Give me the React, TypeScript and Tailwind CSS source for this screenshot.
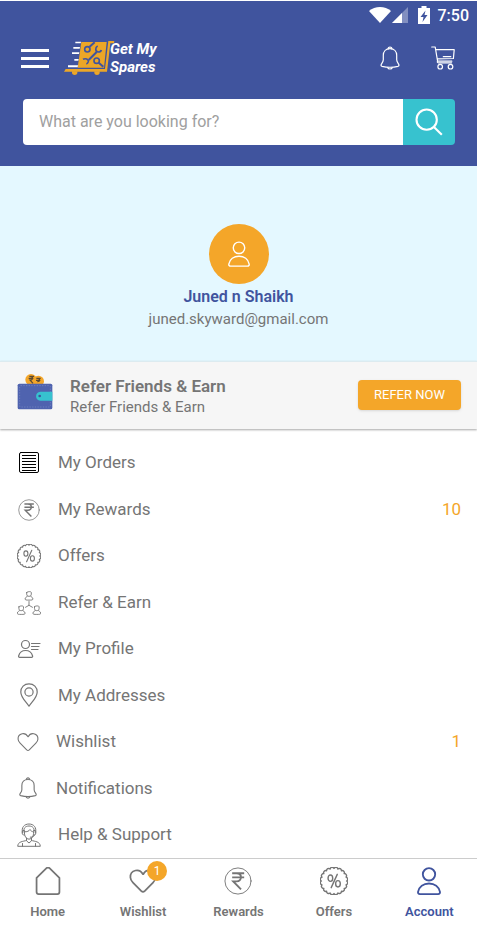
import type { ReactNode, SVGProps } from "react";

type IconProps = SVGProps<SVGSVGElement>;

function Icon({ children, ...props }: IconProps) {
  return (
    <svg
      viewBox="0 0 24 24"
      fill="none"
      stroke="currentColor"
      strokeWidth="1.2"
      strokeLinecap="round"
      strokeLinejoin="round"
      aria-hidden="true"
      {...props}
    >
      {children}
    </svg>
  );
}

// scalloped badge outline: small arcs bulging out around a circle
function scallop(cx: number, cy: number, r: number, bumps: number) {
  const pts = Array.from({ length: bumps }, (_, i) => {
    const a = (i / bumps) * Math.PI * 2;
    return `${(cx + r * Math.cos(a)).toFixed(2)} ${(cy + r * Math.sin(a)).toFixed(2)}`;
  });
  return `M${pts[0]} ` + [...pts.slice(1), pts[0]].map((p) => `A1.8 1.8 0 0 1 ${p}`).join(" ") + "Z";
}

const badgePath = scallop(12, 12, 10.8, 20);

const BellIcon = (p: IconProps) => (
  <Icon {...p}>
    <path d="M10.2 2.8a1.8 1.8 0 1 1 3.6 0" />
    <path d="M12 2.7c-4.300 0-6.700 2.900-6.700 6.600v4.500c0 1.900-.9 2.900-1.900 4.300-.7 1-.4 1.900.6 2.200 5 1.200 11 1.200 16 0 1-.3 1.300-1.200.6-2.200-1-1.400-1.900-2.400-1.900-4.300V9.300C18.700 5.600 16.300 2.700 12 2.700Z" />
    <path d="M9.700 21.500c.5 2 4.100 2 4.600 0" />
  </Icon>
);

const CartIcon = (p: IconProps) => (
  <Icon {...p}>
    <path d="M.7 1h3.500l2.400 14.200h14.200M4.800 3.700h18.400l-.8 8.800-15.900.4M12.300 10.700h7.500M6.600 15.200c-.7.8-.2 1.600.8 1.600h13.200" />
    <circle cx="9.200" cy="20.700" r="2.300" />
    <circle cx="19.500" cy="20.700" r="2.300" />
  </Icon>
);

const UserIcon = (p: IconProps) => (
  <Icon {...p}>
    <circle cx="12" cy="6.300" r="5.300" />
    <path d="M4.200 23.200h15.600c1.200 0 1.800-.8 1.600-1.900-.9-4.300-4.600-7.200-9.400-7.200s-8.500 2.900-9.400 7.200c-.2 1.100.4 1.900 1.600 1.900Z" />
  </Icon>
);

const HeartIcon = (p: IconProps) => (
  <Icon {...p}>
    <path d="M12 6.200C10.300 3.300 7.800 2.500 5.600 3 2.700 3.700 1 6.200 1.200 9c.1 1.900 1.100 3.200 2.200 4.300l7.200 7.300c.9.800 1.900.8 2.800 0l7.200-7.300c1.100-1.100 2.100-2.400 2.200-4.300.2-2.800-1.500-5.300-4.400-6-2.200-.5-4.700.3-6.200 3.200Z" />
  </Icon>
);

const RupeeIcon = (p: IconProps) => (
  <Icon {...p}>
    <circle cx="12" cy="12" r="11.200" strokeWidth=".8" />
    <path
      d="M7 5.400h10.300M7 8.900h10.300M7.500 5.400h3.300c5 0 5 6.900 0 6.900H7.900l6.700 6.900"
      strokeWidth="1.600"
      strokeLinecap="butt"
      strokeLinejoin="miter"
    />
  </Icon>
);

const OffersIcon = (p: IconProps) => (
  <Icon {...p}>
    <path d={badgePath} />
    <ellipse cx="8.900" cy="9.600" rx="2" ry="2.700" />
    <ellipse cx="15.400" cy="14.400" rx="2" ry="2.700" />
    <path d="m14.800 6.300-5.200 11.400" />
  </Icon>
);

const HomeIcon = (p: IconProps) => (
  <Icon {...p}>
    <path d="M2.200 9.300 10.700 1c.8-.7 1.800-.7 2.600 0l8.500 8.300v12.200c0 1-.7 1.700-1.700 1.700H3.900c-1 0-1.700-.7-1.700-1.700V9.300Z" />
  </Icon>
);

const OrdersIcon = (p: IconProps) => (
  <Icon {...p} className="size-6 text-black">
    <rect x="2.500" y="1.500" width="19" height="20" rx="1.500" strokeWidth="1" />
    <path d="M5 4.500h14M5 7.500h14M5 10.500h14M5 13.500h14M5 16.500h14M5 19.500h14" strokeWidth="1" strokeLinecap="butt" />
  </Icon>
);

const ReferIcon = (p: IconProps) => (
  <Icon {...p} strokeWidth=".9">
    {[
      [12, 0],
      [4.2, 14.3],
      [19.8, 14.3],
    ].map(([x, y]) => (
      <g key={x} transform={`translate(${x} ${y})`}>
        <path d="M-2.300 1.500C-2.300.5 2.300.1 2.300 1.500v1.700c0 2.900-4.600 2.900-4.600 0V1.500Z" />
        <path d="M-1.400 5.200c-.3.900-2.500.8-2.500 2.700 0 1.200 1.200 1.200 3.900 1.200s3.900 0 3.900-1.200c0-1.900-2.200-1.800-2.500-2.700" />
      </g>
    ))}
    <path d="M12 10.500v3.800l-3.500 2M12 14.300l3.500 2" />
  </Icon>
);

const ProfileIcon = (p: IconProps) => (
  <Icon {...p}>
    <circle cx="8.500" cy="7.500" r="4" />
    <path d="M2.600 20.300h12c.8 0 1.200-.6 1-1.300-.9-3.200-3.600-5.500-7-5.500S2.500 15.800 1.600 19c-.2.700.2 1.300 1 1.300Z" />
    <path d="M14.500 6.500h8.500M14.500 9.500h7.500M14.500 12.500h6.500" />
  </Icon>
);

const PinIcon = (p: IconProps) => (
  <Icon {...p}>
    <path d="M12 .8c-4.800 0-8.200 3.400-8.200 8.100C3.800 14.500 9 18.500 12 23.200c3-4.700 8.200-8.700 8.200-14.300C20.200 4.200 16.800.8 12 .8Z" />
    <circle cx="12" cy="9" r="4.100" />
  </Icon>
);

const SupportIcon = (p: IconProps) => (
  <Icon {...p} strokeWidth="1">
    <path d="M5.500 9.500C4 4.500 7.300 1 12 1s8 3.500 6.500 8.500" />
    <path d="M7.300 9.300C5.800 5.600 8.200 3 12 3s6.200 2.600 4.700 6.300" />
    <path d="M7.300 7.500H5.700c-1 1.700-.7 3.600.7 4.500h1.100M16.700 7.500h1.600c1 1.700.7 3.600-.7 4.500h-1.100" />
    <path d="M7.300 8.800c3 .2 4.800-.8 5.700-2.300.8 1.500 2 2.200 3.700 2.300 0 4-1.700 7.300-4.700 7.300s-4.700-3.300-4.700-7.300Z" />
    <path d="M17.600 12c-.8 1.700-2.300 2.200-4.300 2.200M9.500 15.200v2.600L12 20l2.500-2.200v-2.600" />
    <path d="M9.500 17.500c-3.600 1-8.500.9-8.800 5.800h22.600c-.3-4.900-5.200-4.800-8.800-5.800M5.500 20.500v2.800M18.500 20.500v2.800" />
  </Icon>
);

function LogoMark() {
  return (
    <svg viewBox="192 120 138 108" className="h-9 w-[46px] overflow-visible" aria-hidden="true">
      <path d="M244 126h76l-8 77h-79Z" fill="#eca627" />
      <path d="M325 123h18l-1 7h-11l-10 85H192l5-8h118Z" fill="#eca627" />
      <path d="M216 214h16v6q-1 5-8 5t-8-5ZM283 214h16v6q-1 5-8 5t-8-5Z" fill="#eca627" />
      <path
        d="M226 125h17l-1 5h-16ZM220 141h20l-1 5h-19ZM216 157h22l-1 5h-21ZM223 177h13l-1 5h-12ZM204 196h30l-1 6h-29Z"
        fill="#fff"
      />
      <g fill="none" stroke="#40549e" strokeWidth="6">
        <circle cx="262" cy="148" r="8" strokeWidth="5" />
        <path d="m268 141 16-14" />
        <path d="m266 180 24-24" />
        <path d="M293 138c-8 4-8 17 2 18 4 0 8-2 9-6" strokeWidth="5" />
        <path d="M249 178c7-4 17-1 16 7-1 4-3 6-6 7" strokeWidth="5" />
        <circle cx="290" cy="182" r="8" strokeWidth="5" />
        <path d="m296 188 14 12" />
      </g>
    </svg>
  );
}

function WalletIcon() {
  return (
    <svg viewBox="51 52 108 111" className="h-[37px] w-9 shrink-0 self-start" aria-hidden="true">
      <circle cx="93" cy="72" r="17" fill="#f4a629" />
      <circle cx="115" cy="77" r="17" fill="#f4a629" />
      <path
        d="M88 62h14M86 68h14M90 62c10 0 10 11 0 11l9 10M109 68h13M108 74h13M112 68c9 0 9 10 0 10"
        fill="none"
        stroke="#5b4a33"
        strokeWidth="3.500"
      />
      <rect x="53" y="84" width="104" height="77" rx="5" fill="#4f63af" />
      <rect x="59" y="90" width="92" height="64" rx="3" fill="none" stroke="#8a98cf" strokeWidth="1.500" strokeDasharray="4 4" />
      <path d="M157 108h-36c-17 0-17 27 0 27h36Z" fill="#37c2cf" />
      <circle cx="119" cy="121" r="4" fill="#40549e" />
    </svg>
  );
}

type MenuItem = { label: string; icon: ReactNode; count?: number; narrow?: boolean };

const menu: MenuItem[] = [
  { label: "My Orders", icon: <OrdersIcon /> },
  { label: "My Rewards", icon: <RupeeIcon className="size-[22px]" />, count: 10 },
  { label: "Offers", icon: <OffersIcon className="size-6" strokeWidth="1.100" /> },
  { label: "Refer & Earn", icon: <ReferIcon className="size-6" /> },
  { label: "My Profile", icon: <ProfileIcon className="size-6" /> },
  { label: "My Addresses", icon: <PinIcon className="size-6" /> },
  { label: "Wishlist", icon: <HeartIcon className="size-[22px]" />, count: 1, narrow: true },
  { label: "Notifications", icon: <BellIcon className="size-[22px]" />, narrow: true },
  { label: "Help & Support", icon: <SupportIcon className="size-6" /> },
];

const tabs = [
  { label: "Home", icon: <HomeIcon className="size-7" strokeWidth="1.500" /> },
  { label: "Wishlist", icon: <HeartIcon className="size-7" strokeWidth="1.500" />, badge: 1 },
  { label: "Rewards", icon: <RupeeIcon className="size-7" /> },
  { label: "Offers", icon: <OffersIcon className="size-7" /> },
  { label: "Account", icon: <UserIcon className="size-7" strokeWidth="1.600" />, active: true },
];

function StatusBar() {
  return (
    <div className="flex h-7 items-center justify-end pr-2 text-white">
      <svg viewBox="0 0 22 16" className="h-4 w-[22px]" fill="currentColor" aria-hidden="true">
        <path d="M0 4C6-1.300 16-1.300 22 4L11 16Z" />
      </svg>
      <svg viewBox="0 0 16 16" className="ml-px size-4" fill="currentColor" aria-hidden="true">
        <path d="M16 0v16H0Z" opacity=".35" />
        <path d="M10 6v10H0Z" />
      </svg>
      <svg viewBox="0 0 12 18" className="ml-2.5 h-[18px] w-3" aria-hidden="true">
        <path d="M3.500 0h5v2H12v16H0V2h3.500Z" fill="#fff" />
        <path d="M7.500 4.500 2.500 11h3l-1 5 5-7h-3Z" fill="#40549e" />
      </svg>
      <span className="ml-2 pt-0.5 text-base font-medium">7:50</span>
    </div>
  );
}

export default function App() {
  return (
    <div className="flex min-h-screen flex-col bg-white pt-px font-[Roboto,sans-serif] text-[#757575]">
      <header className="bg-[#40549e] pb-[21px]">
        <StatusBar />
        <div className="flex h-[58px] items-center pr-[22px] pl-[21px] text-white">
          <button type="button" aria-label="Menu">
            <svg viewBox="0 0 28 19" className="h-[19px] w-7" fill="currentColor" aria-hidden="true">
              <path d="M0 0h28v3H0ZM0 8h28v3H0ZM0 16h28v3H0Z" />
            </svg>
          </button>
          <a href="#" className="ml-[15px] flex items-center">
            <LogoMark />
            <span className="text-[15px] leading-[18px] font-bold italic">
              Get My
              <br />
              Spares
            </span>
          </a>
          <button type="button" aria-label="Notifications" className="ml-auto">
            <BellIcon className="size-6" />
          </button>
          <button type="button" aria-label="Cart" className="ml-[29px]">
            <CartIcon className="size-6" />
          </button>
        </div>

        {/* Search */}
        <form className="mt-3 mr-[22px] ml-[23px] flex h-[46px] overflow-hidden rounded" onSubmit={(e) => e.preventDefault()}>
          <input
            type="search"
            aria-label="Search"
            placeholder="What are you looking for?"
            className="min-w-0 flex-1 bg-white px-4 text-base outline-none placeholder:text-[#a0a0a0]"
          />
          <button type="submit" aria-label="Search" className="flex w-[52px] items-center justify-center bg-[#37c2cf] text-white">
            <Icon className="size-7" strokeWidth="1.800" strokeLinecap="butt">
              <circle cx="10" cy="10" r="8.700" />
              <path d="m16 16 7 7" />
            </Icon>
          </button>
        </form>
      </header>

      {/* Profile */}
      <section className="flex flex-col items-center bg-[#e4f8ff] pt-[58px] pb-[33px]">
        <div className="flex size-15 items-center justify-center rounded-full bg-[#f4a629] text-white">
          <UserIcon className="size-[26px]" strokeWidth="1.300" />
        </div>
        <h1 className="text-base leading-[26px] font-semibold text-[#40549e]">Juned n Shaikh</h1>
        <p className="text-[15px] leading-[18px]">juned.skyward@gmail.com</p>
      </section>

      {/* Refer banner */}
      <section className="flex items-center border-t border-[#dcebf0] bg-[#f6f6f6] pt-[11px] pr-4 pb-3 pl-[17px] shadow-[0_1px_2px_rgba(0,0,0,0.35)]">
        <WalletIcon />
        <div className="ml-[17px] flex-1 pt-0.5">
          <h2 className="text-[17px] leading-[22px] font-semibold">Refer Friends &amp; Earn</h2>
          <p className="text-[15px] leading-5">Refer Friends &amp; Earn</p>
        </div>
        <button type="button" className="h-[30px] rounded bg-[#f4a629] px-4 text-[13px] text-white shadow">
          REFER NOW
        </button>
      </section>

      <ul className="flex flex-1 flex-col pt-[11px]">
        {menu.map((item) => (
          <li key={item.label} className="flex min-h-11 flex-1">
            <a href="#" className="flex flex-1 items-center pr-4 pl-[17px] text-[17px]">
              <span className={item.narrow ? "flex w-[22px] justify-center" : "flex w-6 justify-center"}>{item.icon}</span>
              <span className="ml-[17px]">{item.label}</span>
              {item.count && <span className="ml-auto text-[#f4a629]">{item.count}</span>}
            </a>
          </li>
        ))}
      </ul>

      <nav className="grid grid-cols-5 border-t border-[#cccccc] bg-white pt-2 pb-[7px]">
        {tabs.map((tab) => (
          <a
            key={tab.label}
            href="#"
            className={`flex flex-col items-center gap-[9px] ${tab.active ? "text-[#40549e]" : ""}`}
          >
            <span className="relative">
              {tab.icon}
              {tab.badge && (
                <span className="absolute -top-1.5 -right-2.5 flex size-5 items-center justify-center rounded-full bg-[#f4a629] text-xs text-white">
                  {tab.badge}
                </span>
              )}
            </span>
            <span className="text-[13px] leading-4 font-semibold">{tab.label}</span>
          </a>
        ))}
      </nav>
    </div>
  );
}
